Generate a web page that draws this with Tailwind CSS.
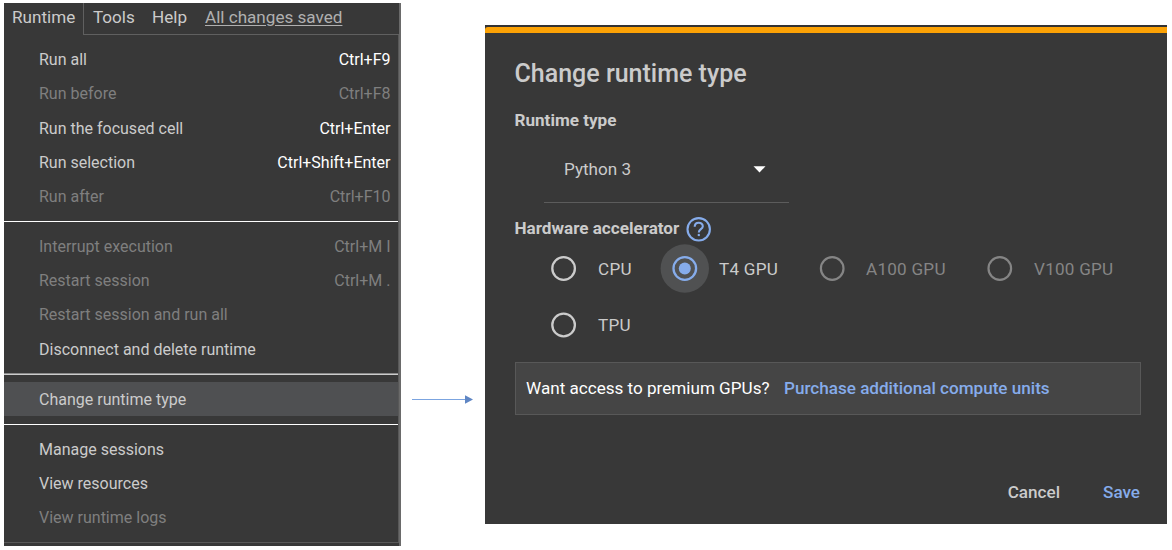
<!DOCTYPE html>
<html lang="en">
<head>
<meta charset="utf-8">
<title>Change runtime type</title>
<script src="https://cdn.jsdelivr.net/npm/@tailwindcss/browser@4"></script>
</head>
<body class="bg-white font-['Roboto',sans-serif] text-[#cbcbcb] flex w-[1172px] h-[550px] overflow-hidden">

<!-- Runtime menu -->
<section class="ml-1 mt-[3px] w-[397px] h-[543px] shrink-0 bg-[#383838] border-r-2 border-[#6a6a6a] flex flex-col text-[16px] whitespace-nowrap">
  <nav class="flex h-8 shrink-0 leading-[28px] text-[17.1px]">
    <span class="w-[80px] shrink-0 border-r border-[#606060] pl-2"><span>Runtime</span></span>
    <div class="flex-1 border-b border-[#606060] flex pl-[9px]">
      <span class="w-[59px]">Tools</span>
      <span class="w-[53px]">Help</span>
      <span class="underline underline-offset-2 text-[#b0b0b0]">All changes saved</span>
    </div>
  </nav>
  <div class="border-r border-b border-[#585858] h-[508px] shrink-0 pt-[8.2px]">
    <ul class="leading-[34.2px] [&>li]:flex [&>li]:justify-between [&>li]:pl-[35px] [&>li]:pr-[7.5px] [&>li]:h-[34.2px]">
      <li><span>Run all</span><span class="text-white">Ctrl+F9</span></li>
      <li class="text-[#7f7f7f]"><span>Run before</span><span>Ctrl+F8</span></li>
      <li><span>Run the focused cell</span><span class="text-white">Ctrl+Enter</span></li>
      <li><span>Run selection</span><span class="text-white">Ctrl+Shift+Enter</span></li>
      <li class="text-[#7f7f7f]"><span>Run after</span><span>Ctrl+F10</span></li>
    </ul>
    <hr class="border-0 h-px bg-white mt-[6.8px] mb-[8.2px]">
    <ul class="leading-[34.2px] [&>li]:flex [&>li]:justify-between [&>li]:pl-[35px] [&>li]:pr-[7.5px] [&>li]:h-[34.2px]">
      <li class="text-[#7f7f7f]"><span>Interrupt execution</span><span>Ctrl+M I</span></li>
      <li class="text-[#7f7f7f]"><span>Restart session</span><span>Ctrl+M .</span></li>
      <li class="text-[#7f7f7f]"><span>Restart session and run all</span></li>
      <li><span>Disconnect and delete runtime</span></li>
    </ul>
    <hr class="border-0 border-t border-[#8a8a8a] h-[2px] bg-[#cccccc] mt-[6px] mb-[7px]">
    <ul class="leading-[35.5px]">
      <li class="bg-[#4f5052] pl-[35px] h-[34px]">Change runtime type</li>
    </ul>
    <hr class="border-0 h-px bg-white mt-[7.8px] mb-[8.2px]">
    <ul class="leading-[34.2px] [&>li]:pl-[35px] [&>li]:h-[34.2px]">
      <li>Manage sessions</li>
      <li>View resources</li>
      <li class="text-[#7f7f7f]">View runtime logs</li>
    </ul>
  </div>
</section>

<!-- Connector arrow -->
<div class="w-[84px] shrink-0 pt-[393px]">
  <svg class="block ml-[11px]" width="62" height="12" viewBox="0 0 62 12"><path d="M0 6.5H54" stroke="#7ba4e0" stroke-width="1"/><path d="M53 2.2L61 6.5L53 10.8Z" fill="#5f86c4"/></svg>
</div>

<!-- Dialog -->
<section class="mt-[25px] w-[682px] h-[499px] shrink-0 bg-[#383838] border-t-2 border-[#333333] flex flex-col text-[17.1px] whitespace-nowrap">
  <div class="h-[6px] shrink-0 bg-[#fca205] rounded-tl-[3px]"></div>
  <h1 class="pl-[29.5px] mt-[26px] leading-[30px] text-[25px] font-medium"><span>Change runtime type</span></h1>
  <h2 class="pl-[29.5px] mt-[21px] leading-[21px] font-bold"><span>Runtime type</span></h2>
  <div class="ml-[59px] mt-[15px] w-[245px] h-[57px] border-b border-[#5c5c5c] flex items-start justify-between pt-3 pl-5 pr-[23px]">
    <span class="leading-[23px]">Python 3</span>
    <svg class="mt-2" width="13" height="7" viewBox="0 0 13 7"><path d="M0.5 0.3H12.5L6.5 6.5Z" fill="#fff"/></svg>
  </div>
  <div class="pl-[29.5px] mt-[12px] h-[26px] flex">
    <h2 class="leading-[26px] font-bold w-[171.5px]"><span>Hardware accelerator</span></h2>
    <svg class="mt-px" width="26" height="26" viewBox="0 0 26 26" fill="none" stroke="#86aceb" stroke-width="2.1"><circle cx="12.7" cy="13.3" r="11.2"/><path d="M8.7 10.8C8.7 5.4 16.8 5.6 16.8 10.2C16.8 13.2 12.8 13.2 12.8 16.4"/><path d="M12.8 17.9V20.1"/></svg>
  </div>
  <div class="mt-[2px] pl-[54px] h-[50px] flex items-center leading-[50px] tracking-[0.25px]">
    <svg class="w-[50px] h-[50px]" viewBox="0 0 50 50"><circle cx="24.6" cy="25.5" r="11.3" fill="none" stroke="#cbcbcb" stroke-width="2.3"/></svg>
    <span class="w-[71px] pl-[9px] pt-px">CPU</span>
    <svg class="w-[50px] h-[50px]" viewBox="0 0 50 50"><circle cx="24.8" cy="25.5" r="24.2" fill="#505152"/><circle cx="24.8" cy="25.5" r="11.3" fill="none" stroke="#86aceb" stroke-width="2.3"/><circle cx="24.8" cy="25.5" r="6" fill="#86aceb"/></svg>
    <span class="w-[97px] pl-[9px] pt-px">T4 GPU</span>
    <svg class="w-[50px] h-[50px]" viewBox="0 0 50 50"><circle cx="25.2" cy="25.5" r="11.3" fill="none" stroke="#858585" stroke-width="2.2"/></svg>
    <span class="w-[118px] pl-[9px] pt-px text-[#858585]">A100 GPU</span>
    <svg class="w-[50px] h-[50px]" viewBox="0 0 50 50"><circle cx="24.8" cy="25.5" r="11.3" fill="none" stroke="#858585" stroke-width="2.2"/></svg>
    <span class="pl-[9px] pt-px text-[#858585]">V100 GPU</span>
  </div>
  <div class="mt-[6px] pl-[54px] h-[50px] flex items-center leading-[50px] tracking-[0.25px]">
    <svg class="w-[50px] h-[50px]" viewBox="0 0 50 50"><circle cx="24.6" cy="26" r="11.3" fill="none" stroke="#cbcbcb" stroke-width="2.3"/></svg>
    <span class="pl-[9px] pt-[2px]">TPU</span>
  </div>
  <div class="ml-[30px] mt-[13px] w-[626px] h-[53px] border border-[#585858] bg-[#454545] flex pl-[10px] leading-[51px]">
    <span class="w-[258px] text-white">Want access to premium GPUs?</span>
    <span class="font-medium text-[#86aceb]">Purchase additional compute units</span>
  </div>
  <div class="mt-[67px] flex justify-end gap-[43px] pr-[27px] leading-[21px] font-medium">
    <span>Cancel</span>
    <span class="text-[#86aceb]">Save</span>
  </div>
</section>
</body>
</html>
